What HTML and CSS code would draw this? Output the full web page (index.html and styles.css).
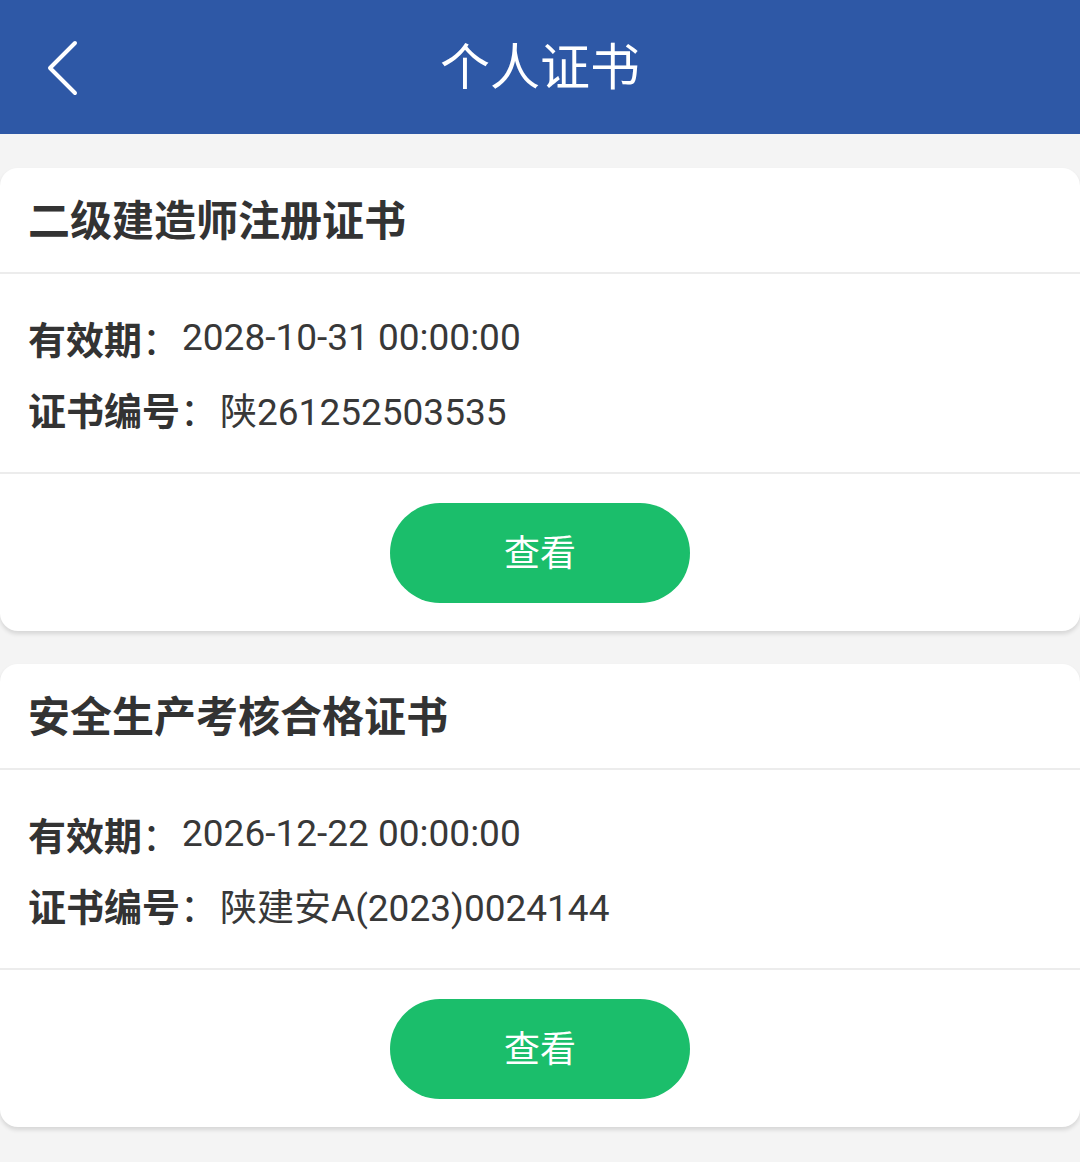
FILE: index.html
```html
<!DOCTYPE html>
<html lang="zh-CN">
<head>
<meta charset="utf-8">
<title>个人证书</title>
<link rel="stylesheet" href="styles.css">
</head>
<body>
<header class="topbar">
  <span class="back">
    <svg width="40" height="60" viewBox="0 0 40 60"><path d="M32 7 L7 32 L32 57" fill="none" stroke="#fff" stroke-width="4" stroke-linecap="round" stroke-linejoin="round"/></svg>
  </span>
  <h1 class="title">个人证书</h1>
</header>
<main class="list">
  <section class="card">
    <div class="card-title">二级建造师注册证书</div>
    <div class="card-info">
      <div class="row"><span class="label">有效期</span><span class="colon">：</span><span class="value">2028-10-31 00:00:00</span></div>
      <div class="row"><span class="label">证书编号</span><span class="colon">：</span><span class="value">陕261252503535</span></div>
    </div>
    <div class="card-actions"><button class="btn">查看</button></div>
  </section>
  <section class="card">
    <div class="card-title">安全生产考核合格证书</div>
    <div class="card-info">
      <div class="row"><span class="label">有效期</span><span class="colon">：</span><span class="value">2026-12-22 00:00:00</span></div>
      <div class="row"><span class="label">证书编号</span><span class="colon">：</span><span class="value">陕建安A(2023)0024144</span></div>
    </div>
    <div class="card-actions"><button class="btn">查看</button></div>
  </section>
</main>
</body>
</html>
```
FILE: styles.css
```css
html, body {
  margin: 0;
  padding: 0;
}
body {
  background: #f4f4f4;
  font-family: Roboto, "Noto Sans CJK SC", sans-serif;
  color: #333;
  width: 1080px;
  min-height: 1162px;
}
.topbar {
  height: 134px;
  background: #2e58a6;
  display: flex;
  align-items: center;
  justify-content: center;
  position: relative;
}
.back {
  position: absolute;
  left: 43px;
  top: 36px;
  display: block;
  line-height: 0;
}
.title {
  margin: 0;
  color: #fff;
  font-family: "Noto Sans CJK SC", sans-serif;
  font-weight: 400;
  font-size: 50px;
  line-height: 1;
  padding-bottom: 8px;
}
.list {
  padding: 34px 0 0;
  display: flex;
  flex-direction: column;
  gap: 33px;
}
.card {
  background: #fff;
  border-radius: 18px;
  box-shadow: 0 3px 4px rgba(0, 0, 0, 0.12);
  overflow: hidden;
}
.card-title {
  box-sizing: border-box;
  height: 106px;
  display: flex;
  align-items: center;
  padding: 0 28px 6px;
  font-family: "Noto Sans CJK SC", sans-serif;
  font-weight: 700;
  font-size: 42px;
  color: #333;
  border-bottom: 2px solid #ececec;
}
.card-info {
  padding: 28px;
  border-bottom: 2px solid #ececec;
}
.row {
  height: 71px;
  display: flex;
  align-items: center;
  font-size: 38px;
  color: #333;
}
.label {
  font-family: "Noto Sans CJK SC", sans-serif;
  font-weight: 700;
}
.colon {
  font-family: "Noto Sans CJK SC", sans-serif;
  font-weight: 400;
  width: 40px;
  display: inline-block;
}
.value {
  font-family: Roboto, "Noto Sans CJK SC", sans-serif;
  font-weight: 400;
  font-size: 37px;
  color: #383838;
}
.card-actions {
  padding: 29px 0 28px;
  display: flex;
  justify-content: center;
}
.btn {
  width: 300px;
  height: 100px;
  border: 0;
  border-radius: 50px;
  background: #1bbe6b;
  color: #fff;
  font-family: "Noto Sans CJK SC", sans-serif;
  font-size: 36px;
  padding: 0 0 6px;
  cursor: pointer;
}
```
